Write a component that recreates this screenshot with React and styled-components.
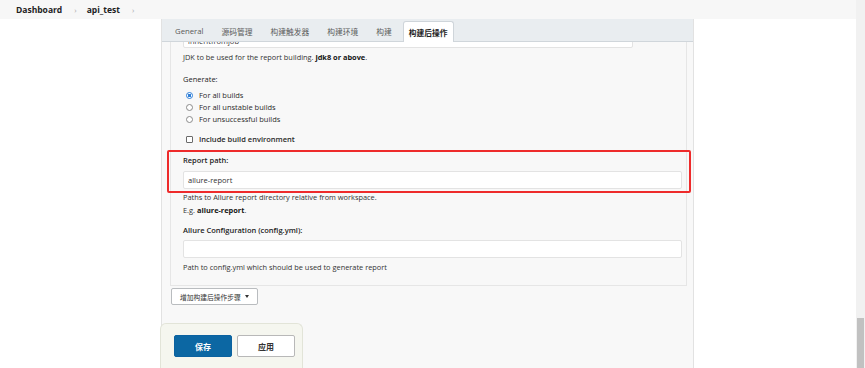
import React from "react";
import styled, { createGlobalStyle } from "styled-components";

const GlobalStyle = createGlobalStyle`
  html, body {
    margin: 0;
    padding: 0;
    background: #fff;
  }
  body {
    font-family: "Open Sans", "Noto Sans CJK SC", sans-serif;
    color: #333;
  }
`;

const Page = styled.div`
  display: flex;
  width: 865px;
  height: 368px;
  overflow: hidden;
`;

const Main = styled.div`
  flex: 1;
  display: flex;
  flex-direction: column;
  min-width: 0;
`;

const Scrollbar = styled.div`
  width: 9px;
  background: #f1f1f1;
  display: flex;
  flex-direction: column;
  justify-content: flex-end;
`;

const Thumb = styled.div`
  height: 50px;
  margin: 0 1px;
  background: #c1c1c1;
`;

const Breadcrumbs = styled.div`
  height: 19px;
  flex-shrink: 0;
  background: #f7f7f7;
  display: flex;
  align-items: center;
  padding-left: 16px;
`;

const Crumb = styled.span`
  font-size: 8.5px;
  font-weight: 700;
  color: #222;
`;

const Chevron = styled.span`
  margin: 0 10px 0 12px;
  font-size: 8px;
  color: #aaa;
`;

const Body = styled.div`
  flex: 1;
  position: relative;
  display: flex;
  min-height: 0;
`;

const Panel = styled.div`
  margin-left: 161px;
  width: 533px;
  box-sizing: border-box;
  border-left: 1px solid #e2e2e2;
  border-right: 1px solid #e2e2e2;
  background: #f8f8f8;
  display: flex;
  flex-direction: column;
`;

const TabBar = styled.div`
  height: 22px;
  flex-shrink: 0;
  background: #e9edf0;
  border-bottom: 1px solid #d0d6db;
  display: flex;
  align-items: flex-end;
  padding-left: 4px;
`;

const Tab = styled.div`
  height: 20px;
  display: flex;
  align-items: center;
  padding: ${(p) => (p.$active ? "0 5px" : "0 8px")};
  margin-left: ${(p) => (p.$active ? "2px" : "0")};
  margin-bottom: ${(p) => (p.$active ? "-1px" : "0")};
  font-size: 7.75px;
  font-weight: ${(p) => (p.$active ? 700 : 400)};
  color: ${(p) => (p.$active ? "#1e1e1e" : "#5a5a5a")};
  background: ${(p) => (p.$active ? "#fff" : "transparent")};
  border: ${(p) => (p.$active ? "1px solid #cfd5da" : "1px solid transparent")};
  border-bottom: none;
  border-radius: 3px 3px 0 0;
`;

const Viewport = styled.div`
  flex: 1;
  overflow: hidden;
  padding: 0 6px 0 8px;
`;

const Section = styled.div`
  margin-top: -13px;
  border: 1px solid #e6e6e6;
  background: #f8f8f8;
  padding: 0 4px 11px 12px;
`;

const TextInput = styled.div`
  box-sizing: border-box;
  height: 18px;
  width: ${(p) => p.$width || "100%"};
  margin-top: ${(p) => p.$top || 0}px;
  background: #fff;
  border: 1px solid #e3e3e3;
  border-radius: 2px;
  display: flex;
  align-items: ${(p) => (p.$low ? "flex-end" : "center")};
  padding: 0 0 ${(p) => (p.$low ? "1px" : "0")} 4px;
  font-size: 7.5px;
  line-height: 10px;
  color: #333;
`;

const Help = styled.div`
  margin-top: ${(p) => p.$top || 0}px;
  font-size: 7.4px;
  line-height: 13px;
  color: #333;

  b {
    color: #151515;
  }
`;

const Label = styled.div`
  margin-top: ${(p) => p.$top || 0}px;
  font-size: 7.5px;
  line-height: 12px;
  font-weight: ${(p) => (p.$bold ? 600 : 400)};
  color: #1e1e1e;
`;

const OptionList = styled.div`
  margin-top: 4px;
  display: flex;
  flex-direction: column;
`;

const Option = styled.div`
  height: 12px;
  display: flex;
  align-items: center;
  padding-left: 3px;
  gap: 6px;
  font-size: 7.5px;
  color: #2a2a2a;
  font-weight: ${(p) => (p.$bold ? 600 : 400)};
  margin-top: ${(p) => p.$top || 0}px;
`;

const Radio = styled.span`
  box-sizing: border-box;
  width: 7px;
  height: 7px;
  border-radius: 50%;
  border: 1px solid ${(p) => (p.$checked ? "#2f7fd8" : "#8a8a8a")};
  background: ${(p) =>
    p.$checked ? "radial-gradient(circle, #2f7fd8 0 1.6px, #fff 2px)" : "#fff"};
`;

const Checkbox = styled.span`
  box-sizing: border-box;
  width: 7px;
  height: 7px;
  border-radius: 1px;
  border: 1px solid #6a6a6a;
  background: #fff;
`;

const Marked = styled.div`
  position: relative;
  margin-top: 9px;

  &::after {
    content: "";
    position: absolute;
    top: -4px;
    bottom: -4px;
    left: -16px;
    right: -9px;
    border: 2px solid #ee2b2b;
    border-radius: 2px;
    pointer-events: none;
  }
`;

const AddButton = styled.button`
  align-self: flex-start;
  margin: 2px 0 0 1px;
  height: 17px;
  padding: 0 8px 0 8px;
  display: flex;
  align-items: center;
  gap: 4px;
  background: #fff;
  border: 1px solid #b9bcbf;
  border-radius: 2px;
  font-family: inherit;
  font-size: 6.75px;
  color: #333;
`;

const Caret = styled.span`
  width: 0;
  height: 0;
  border-left: 2.5px solid transparent;
  border-right: 2.5px solid transparent;
  border-top: 3px solid #333;
`;

const Footer = styled.div`
  position: absolute;
  left: 160px;
  bottom: 0;
  width: 143px;
  height: 45px;
  box-sizing: border-box;
  background: #f5f6ef;
  border: 1px solid #e2e4d8;
  border-bottom: none;
  border-radius: 6px 6px 0 0;
  display: flex;
  gap: 5px;
  padding: 11px 0 0 13px;
`;

const ActionButton = styled.button`
  width: 58px;
  height: 22px;
  box-sizing: border-box;
  border-radius: 2px;
  font-family: inherit;
  font-size: 8px;
  font-weight: 700;
  border: 1px solid ${(p) => (p.$primary ? "#0b62a0" : "#b8b8b8")};
  background: ${(p) => (p.$primary ? "#0c67a3" : "#fff")};
  color: ${(p) => (p.$primary ? "#fff" : "#333")};
`;

const tabs = ["General", "源码管理", "构建触发器", "构建环境", "构建"];

export default function App() {
  return (
    <Page>
      <GlobalStyle />
      <Main>
        <Breadcrumbs>
          <Crumb>Dashboard</Crumb>
          <Chevron>›</Chevron>
          <Crumb>api_test</Crumb>
          <Chevron>›</Chevron>
        </Breadcrumbs>
        <Body>
          <Panel>
            <TabBar>
              {tabs.map((t) => (
                <Tab key={t}>{t}</Tab>
              ))}
              <Tab $active>构建后操作</Tab>
            </TabBar>
            <Viewport>
              <Section>
                <TextInput $width="450px" $low>
                  inheritfromjob
                </TextInput>
                <Help $top={3}>
                  JDK to be used for the report building. <b>jdk8 or above</b>.
                </Help>
                <Label $top={9}>Generate:</Label>
                <OptionList>
                  <Option>
                    <Radio $checked />
                    For all builds
                  </Option>
                  <Option>
                    <Radio />
                    For all unstable builds
                  </Option>
                  <Option>
                    <Radio />
                    For unsuccessful builds
                  </Option>
                  <Option $bold $top={8}>
                    <Checkbox />
                    Include build environment
                  </Option>
                </OptionList>
                <Marked>
                  <Label $bold>Report path:</Label>
                  <TextInput $top={5}>allure-report</TextInput>
                </Marked>
                <Help $top={2}>
                  Paths to Allure report directory relative from workspace.
                  <br />
                  E.g. <b>allure-report</b>.
                </Help>
                <Label $bold $top={7}>
                  Allure Configuration (config.yml):
                </Label>
                <TextInput $top={4} />
                <Help $top={3}>
                  Path to config.yml which should be used to generate report
                </Help>
              </Section>
              <AddButton>
                增加构建后操作步骤
                <Caret />
              </AddButton>
            </Viewport>
          </Panel>
          <Footer>
            <ActionButton $primary>保存</ActionButton>
            <ActionButton>应用</ActionButton>
          </Footer>
        </Body>
      </Main>
      <Scrollbar>
        <Thumb />
      </Scrollbar>
    </Page>
  );
}
